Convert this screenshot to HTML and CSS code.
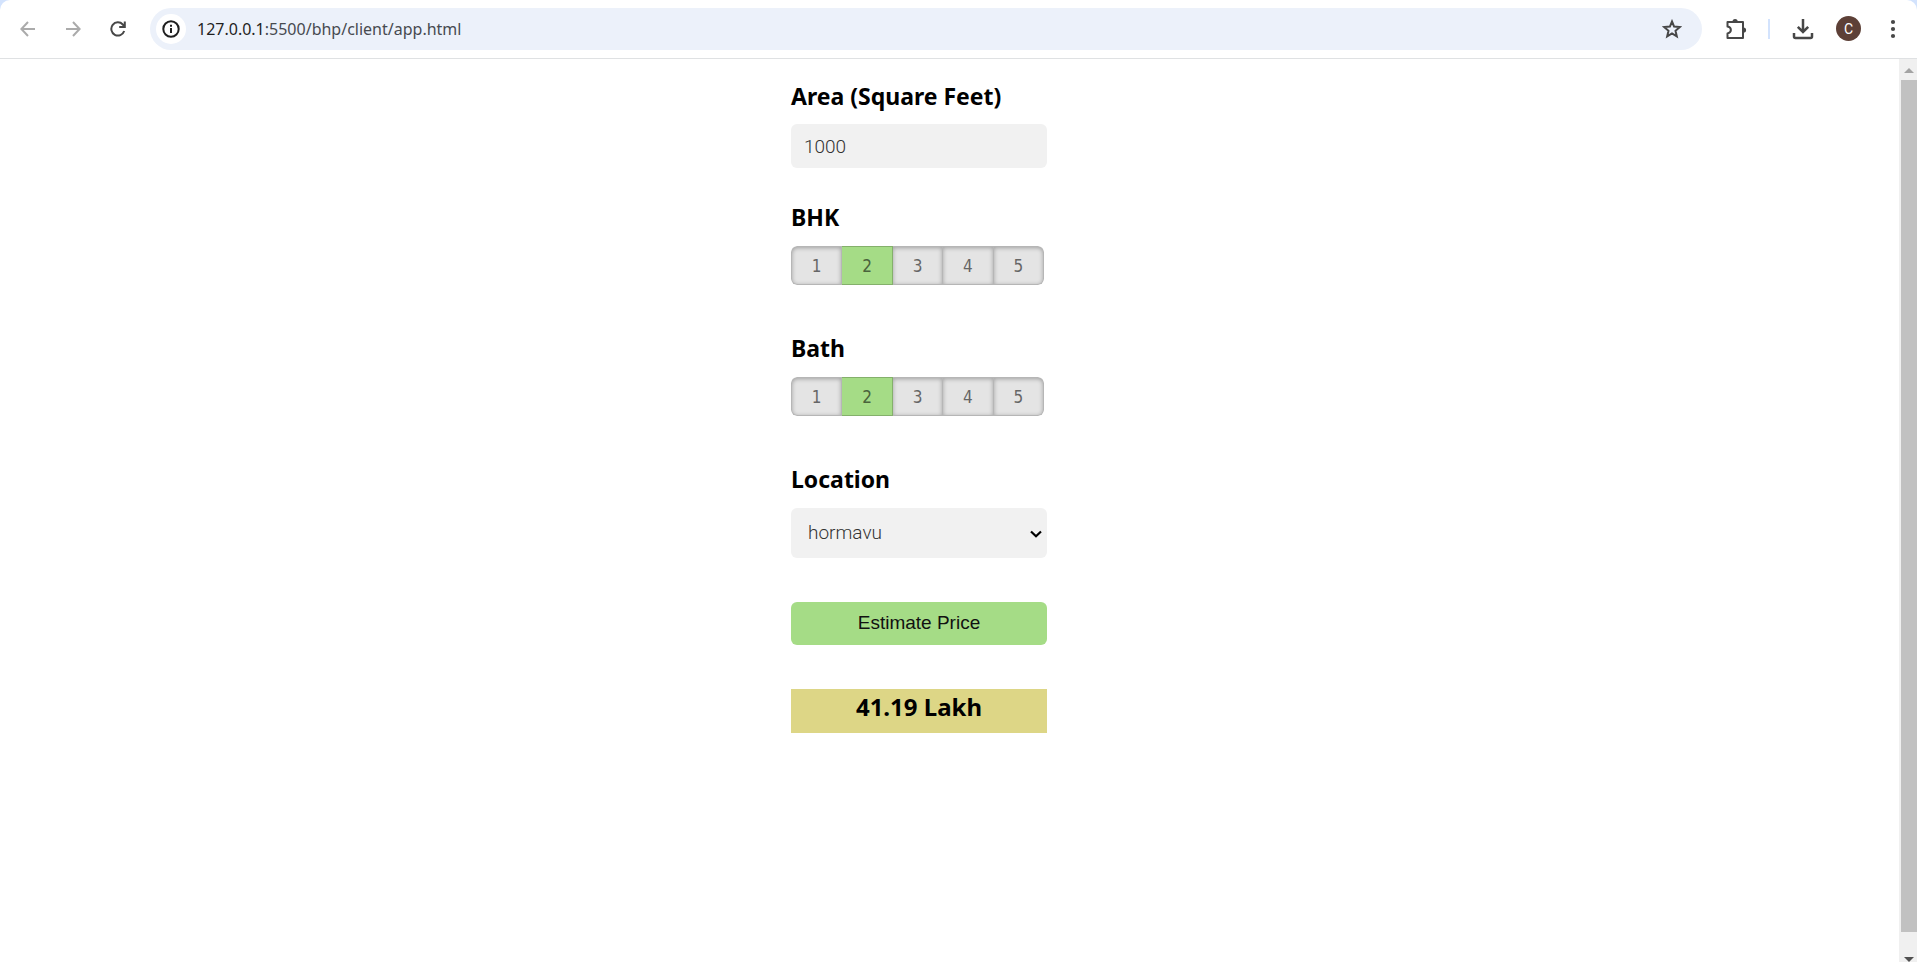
FILE: index.html
```html
<!DOCTYPE html>
<html lang="en">
<head>
<meta charset="utf-8">
<title>Home Price Estimator</title>
<link rel="stylesheet" href="styles.css">
</head>
<body>
<header class="toolbar">
  <nav class="nav">
    <button class="icon-btn dim" aria-label="Back"><svg width="16" height="16" viewBox="0 0 16 16"><path d="M15 8H2M8 1L1.400 8L8 15"/></svg></button>
    <button class="icon-btn dim" aria-label="Forward"><svg width="16" height="16" viewBox="0 0 16 16"><path d="M1 8H14M8 1L14.600 8L8 15"/></svg></button>
    <button class="icon-btn" aria-label="Reload"><svg width="16" height="16" viewBox="0 0 16 16"><path d="M14.200 10A6.600 6.600 0 1 1 12.800 3.500L14.500 5.500M14.800 .5V6H9.200"/></svg></button>
  </nav>
  <div class="omnibox">
    <button class="site-info" aria-label="Site information"><svg width="18" height="18" viewBox="0 0 18 18"><circle cx="9" cy="9" r="7.700"/><path d="M9 8V13M9 4.800V6.800"/></svg></button>
    <a class="url" href="#"><span class="host">127.0.0.1</span>:5500/bhp/client/app.html</a>
    <button class="icon-btn star" aria-label="Bookmark"><svg width="20" height="20" viewBox="0 0 20 20"><path d="M10 2.500L12.100 7.600L17.800 8.100L13.500 11.800L14.800 17.300L10 14.400L5.200 17.300L6.500 11.800L2.200 8.100L7.900 7.600Z"/></svg></button>
  </div>
  <div class="actions">
    <button class="icon-btn" aria-label="Extensions"><svg width="22" height="22" viewBox="0 0 22 22"><path d="M2.500 4H18V20H2.500V15.400C7 14.500 7 9.500 2.500 8.600Z" stroke-linejoin="round"/><path class="fill" d="M7.500 3.500A2.600 2.600 0 0 1 12.700 3.500ZM18.500 9.400A2.600 2.600 0 0 1 18.500 14.600Z"/></svg></button>
    <span class="divider"></span>
    <button class="icon-btn download" aria-label="Downloads"><svg width="22" height="22" viewBox="0 0 22 22"><path d="M11 1V13.500M5.800 8.800L11 14L16.200 8.800M2 15V18.500Q2 20 3.500 20H18.500Q20 20 20 18.500V15"/></svg></button>
    <button class="avatar" aria-label="Profile">C</button>
    <button class="icon-btn" aria-label="Menu"><svg width="6" height="20" viewBox="0 0 6 20"><g class="fill"><circle cx="3" cy="3" r="2.100"/><circle cx="3" cy="10" r="2.100"/><circle cx="3" cy="17" r="2.100"/></g></svg></button>
  </div>
</header>
<div class="viewport">
  <main class="page">
    <form class="form">
      <label class="title" for="area">Area (Square Feet)</label>
      <input class="area" id="area" type="text" value="1000">
      <fieldset class="group">
        <legend class="title">BHK</legend>
        <div class="switch">
          <input type="radio" id="bhk1" name="bhk"><label for="bhk1">1</label>
          <input type="radio" id="bhk2" name="bhk" checked><label for="bhk2">2</label>
          <input type="radio" id="bhk3" name="bhk"><label for="bhk3">3</label>
          <input type="radio" id="bhk4" name="bhk"><label for="bhk4">4</label>
          <input type="radio" id="bhk5" name="bhk"><label for="bhk5">5</label>
        </div>
      </fieldset>
      <fieldset class="group">
        <legend class="title">Bath</legend>
        <div class="switch">
          <input type="radio" id="bath1" name="bath"><label for="bath1">1</label>
          <input type="radio" id="bath2" name="bath" checked><label for="bath2">2</label>
          <input type="radio" id="bath3" name="bath"><label for="bath3">3</label>
          <input type="radio" id="bath4" name="bath"><label for="bath4">4</label>
          <input type="radio" id="bath5" name="bath"><label for="bath5">5</label>
        </div>
      </fieldset>
      <label class="title" for="location">Location</label>
      <div class="select-box">
        <select class="location" id="location"><option>hormavu</option></select>
        <svg class="chevron" width="12" height="8" viewBox="0 0 12 8"><path d="M1 1.500L6 6.300L11 1.500"/></svg>
      </div>
      <button class="submit" type="button">Estimate Price</button>
      <output class="result">41.19 Lakh</output>
    </form>
  </main>
  <div class="scrollbar">
    <svg width="10" height="5" viewBox="0 0 10 5"><path fill="#a3a3a3" d="M5 0L10 5H0Z"/></svg>
    <div class="thumb"></div>
    <svg width="10" height="5" viewBox="0 0 10 5"><path fill="#505050" d="M0 0H10L5 5Z"/></svg>
  </div>
</div>
</body>
</html>
```

FILE: styles.css
```css
* {
  box-sizing: border-box;
}

body {
  margin: 0;
  height: 100vh;
  display: flex;
  flex-direction: column;
  background: #d3e3fd;
  font-family: "Noto Sans", sans-serif;
}

button {
  border: 0;
  padding: 0;
  background: none;
}

.toolbar {
  flex: none;
  height: 59px;
  display: flex;
  align-items: center;
  padding: 0 21px 1px 20px;
  background: #fff;
  border-bottom: 1px solid #dfe1e3;
  border-radius: 10px 10px 0 0;
}

.nav {
  display: flex;
  gap: 29px;
  margin-right: 24px;
}

.icon-btn {
  display: flex;
}

.icon-btn svg {
  fill: none;
  stroke: #474747;
  stroke-width: 2;
}

.dim svg {
  stroke: #ababab;
}

.download svg {
  stroke-width: 2.5;
}

.icon-btn .fill {
  fill: #474747;
  stroke: none;
}

.omnibox {
  flex: 1;
  height: 42px;
  margin-top: 1px;
  display: flex;
  align-items: center;
  padding: 0 20px 0 6px;
  border-radius: 21px;
  background: #ecf1fa;
}

.site-info {
  width: 30px;
  height: 30px;
  display: grid;
  place-items: center;
  border-radius: 50%;
  background: #fff;
}

.site-info svg {
  fill: none;
  stroke: #1f1f1f;
  stroke-width: 2;
}

.url {
  flex: 1;
  margin-left: 11px;
  font-size: 16px;
  color: #474a50;
  text-decoration: none;
}

.host {
  color: #1f1f1f;
}

.actions {
  display: flex;
  align-items: center;
  margin-left: 23px;
}

.divider {
  width: 2px;
  height: 20px;
  margin: 0 22px 0 21px;
  background: #d3e3fd;
}

.avatar {
  width: 25px;
  height: 25px;
  margin: 0 29px 0 22px;
  border-radius: 50%;
  background: #5d4037;
  color: #fff;
  font: 14px Roboto, sans-serif;
}

.viewport {
  flex: 1;
  min-height: 0;
  display: flex;
  background: #fff;
}

.page {
  flex: 1;
  padding: 22px 61px 0 0;
}

.form {
  width: 256px;
  margin: 0 auto;
  display: flex;
  flex-direction: column;
}

.title {
  height: 32px;
  padding: 0;
  font-size: 23px;
  font-weight: 700;
  line-height: 30px;
  color: #000;
  white-space: nowrap;
}

.area,
.location {
  width: 100%;
  border: 0;
  border-radius: 6px;
  background: #f1f1f1;
  color: #333;
  font-family: Roboto, sans-serif;
  font-size: 19px;
  font-weight: 300;
}

.area {
  height: 44px;
  margin: 11px 0 34px;
  padding: 0 13px;
}

.group {
  margin: 0 0 48px;
  padding: 0;
  border: 0;
  min-width: 0;
}

.switch {
  width: 253px;
  height: 39px;
  margin-top: 12px;
  display: flex;
  border-radius: 6px;
  overflow: hidden;
}

.switch input {
  position: absolute;
  opacity: 0;
}

.switch label {
  flex: 1;
  border: 1px solid rgba(0, 0, 0, 0.2);
  border-left-width: 0;
  background: #e4e4e4;
  box-shadow: inset 0 1px 4px rgba(0, 0, 0, 0.3);
  color: #666;
  font-family: "DejaVu Sans Condensed", "DejaVu Sans", sans-serif;
  font-size: 17px;
  line-height: 38px;
  text-align: center;
}

.switch label:first-of-type {
  border-left-width: 1px;
  border-radius: 6px 0 0 6px;
}

.switch label:last-of-type {
  border-radius: 0 6px 6px 0;
}

.switch input:checked + label {
  background: #a5dc86;
  box-shadow: none;
  color: #4a633c;
}

.select-box {
  position: relative;
  margin: 12px 0 44px;
}

.location {
  display: block;
  height: 50px;
  padding: 0 30px 2px 17px;
  appearance: none;
}

.chevron {
  position: absolute;
  top: 22px;
  right: 5px;
  fill: none;
  stroke: #000;
  stroke-width: 2.2;
  pointer-events: none;
}

.submit {
  height: 43px;
  margin-bottom: 44px;
  padding-bottom: 2px;
  border-radius: 6px;
  background: #a5dc86;
  color: #111;
  font-family: "Liberation Sans", sans-serif;
  font-size: 19px;
}

.result {
  height: 44px;
  background: #ddd686;
  color: #000;
  font-size: 24px;
  font-weight: 700;
  line-height: 36px;
  text-align: center;
}

.scrollbar {
  width: 18px;
  display: flex;
  flex-direction: column;
  align-items: center;
  justify-content: space-between;
  padding: 9px 0 0 2px;
  background: #f0f0f0;
}

.thumb {
  flex: 1;
  width: 100%;
  margin: 7px 0 25px;
  background: #c1c1c1;
}
```
